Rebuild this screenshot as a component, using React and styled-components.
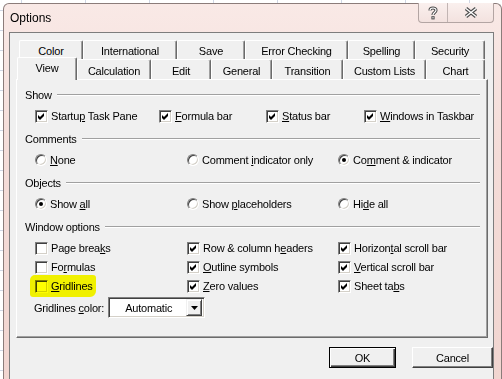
import styled, { createGlobalStyle } from 'styled-components';

const GlobalStyle = createGlobalStyle`
  html, body {
    margin: 0;
    padding: 0;
    width: 502px;
    height: 379px;
    overflow: hidden;
  }
  body {
    background-color: #ffffff;
    background-image:
      linear-gradient(90deg, #d0d7e5 1px, transparent 1px),
      linear-gradient(#d0d7e5 1px, transparent 1px);
    background-size: 64px 20px;
    background-position: 21px 10px;
    font-family: "Liberation Sans", Arial, sans-serif;
  }
`;

const rowOne = [
  ['Color', 64], ['International', 94], ['Save', 68],
  ['Error Checking', 103], ['Spelling', 67], ['Security', 70],
];
const rowTwo = [
  ['View', 60], ['Calculation', 74], ['Edit', 60], ['General', 61],
  ['Transition', 71], ['Custom Lists', 83], ['Chart', 59],
];

// label with access key: [before, key, after]
const Label = ({ t }) => (
  <span>{t[0]}<u>{t[1]}</u>{t[2]}</span>
);

const Check = ({ on }) => (
  <CheckBox>
    {on && (
      <svg width="7" height="7" viewBox="0 0 7 7">
        <path d="M0 2 L2 4 L6 0 L6 3 L2 7 L0 5 Z" fill="#000" />
      </svg>
    )}
  </CheckBox>
);

const CheckItem = ({ on, t, highlight }) => (
  <Item>
    <Check on={on} />
    <Label t={t} />
    {highlight && <Marker />}
  </Item>
);

const RadioItem = ({ on, t }) => (
  <Item>
    <Radio>{on && <Dot />}</Radio>
    <Label t={t} />
  </Item>
);

const Section = ({ title, children }) => (
  <Group>
    <Header>
      <span>{title}</span>
      <Rule />
    </Header>
    {children}
  </Group>
);

const App = () => {
  return (
    <>
      <GlobalStyle />
      <Window>
        <TitleBar>
          <Title>Options</Title>
          <Caption>
            <CapButton $w={28}>
              <svg width="10" height="14" viewBox="0 0 10 14">
                <path d="M2 4.5 C2 1.2 8 1.2 8 4.3 C8 6.5 5 6.5 5 9" fill="none" stroke="#4d4d4d" strokeWidth="3.2" />
                <path d="M2 4.5 C2 1.2 8 1.2 8 4.3 C8 6.5 5 6.5 5 9" fill="none" stroke="#fff" strokeWidth="1.2" />
                <rect x="3.4" y="10.2" width="3.2" height="3.2" fill="#4d4d4d" />
                <rect x="4.4" y="11.2" width="1.2" height="1.2" fill="#fff" />
              </svg>
            </CapButton>
            <CapButton $w={45} $last>
              <svg width="14" height="11" viewBox="0 0 14 11">
                <path d="M2 1.5 L12 9.5 M12 1.5 L2 9.5" stroke="#4d4d4d" strokeWidth="3.6" />
                <path d="M2 1.5 L12 9.5 M12 1.5 L2 9.5" stroke="#fff" strokeWidth="1.4" />
              </svg>
            </CapButton>
          </Caption>
        </TitleBar>

        <Client>
          <TabControl>
            <TabRow $indent={3} $h={19}>
              {rowOne.map(([name, w]) => (
                <Tab key={name} $w={w} $h={19}>{name}</Tab>
              ))}
            </TabRow>
            <TabRow $indent={1} $h={20}>
              {rowTwo.map(([name, w], i) => (
                <Tab key={name} $w={w} $h={20} $active={i === 0}>{name}</Tab>
              ))}
            </TabRow>

            <Panel>
              <Section title="Show">
                <Options $cols="124px 107px 98px auto">
                  <CheckItem on t={['Startu', 'p', ' Task Pane']} />
                  <CheckItem on t={['', 'F', 'ormula bar']} />
                  <CheckItem on t={['', 'S', 'tatus bar']} />
                  <CheckItem on t={['', 'W', 'indows in Taskbar']} />
                </Options>
              </Section>

              <Section title="Comments">
                <Options $cols="152px 151px auto">
                  <RadioItem t={['', 'N', 'one']} />
                  <RadioItem t={['Comment ', 'i', 'ndicator only']} />
                  <RadioItem on t={['Co', 'm', 'ment & indicator']} />
                </Options>
              </Section>

              <Section title="Objects">
                <Options $cols="152px 151px auto">
                  <RadioItem on t={['Show ', 'a', 'll']} />
                  <RadioItem t={['Show ', 'p', 'laceholders']} />
                  <RadioItem t={['Hi', 'd', 'e all']} />
                </Options>
              </Section>

              <Section title="Window options">
                <Options $cols="152px 151px auto" $gap={5}>
                  <CheckItem t={['Page brea', 'k', 's']} />
                  <CheckItem on t={['Row & column h', 'e', 'aders']} />
                  <CheckItem on t={['Horizon', 't', 'al scroll bar']} />
                  <CheckItem t={['Fo', 'r', 'mulas']} />
                  <CheckItem on t={['', 'O', 'utline symbols']} />
                  <CheckItem on t={['', 'V', 'ertical scroll bar']} />
                  <CheckItem highlight t={['', 'G', 'ridlines']} />
                  <CheckItem on t={['', 'Z', 'ero values']} />
                  <CheckItem on t={['Sheet ta', 'b', 's']} />
                </Options>
                <ColorRow>
                  <Label t={['Gridlines ', 'c', 'olor:']} />
                  <Combo>
                    <ComboText>Automatic</ComboText>
                    <ComboButton>
                      <svg width="7" height="4" viewBox="0 0 7 4">
                        <path d="M0 0 H7 L3.5 4 Z" fill="#000" />
                      </svg>
                    </ComboButton>
                  </Combo>
                </ColorRow>
              </Section>
            </Panel>
          </TabControl>

          <ButtonRow>
            <PushButton $w={67} $default>OK</PushButton>
            <PushButton $w={81}>Cancel</PushButton>
          </ButtonRow>
        </Client>
      </Window>
    </>
  );
};

//Styled Components
const Window = styled.div`
  box-sizing: border-box;
  margin: 3px 0 0 3px;
  width: 499px;
  height: 380px;
  border: 1px solid #8b7c7a;
  border-bottom: none;
  border-radius: 6px 6px 0 0;
  background: linear-gradient(180deg, #f9e9e6 0%, #f4dcd8 40%, #f1d5d0 100%);
  display: flex;
  flex-direction: column;
`

const TitleBar = styled.div`
  height: 28px;
  display: flex;
  align-items: center;
  justify-content: space-between;
  padding-left: 6px;
  padding-right: 7px;
`

const Title = styled.div`
  font-family: "Liberation Sans", Arial, sans-serif;
  font-size: 12px;
  color: #000;
`

const Caption = styled.div`
  align-self: flex-start;
  margin-top: -1px;
  display: flex;
  height: 19px;
  border: 1px solid #b3a5a3;
  border-top: none;
  border-radius: 0 0 4px 4px;
  background: linear-gradient(180deg, #faf0ee, #f3e2df);
  overflow: hidden;
`

const CapButton = styled.div`
  width: ${p => p.$w}px;
  display: flex;
  align-items: center;
  justify-content: center;
  border-right: ${p => (p.$last ? 'none' : '1px solid #c2b5b3')};
`

const Client = styled.div`
  flex: 1;
  margin: 0 7px 0 5px;
  border: 1px solid #7d7d7d;
  border-bottom: none;
  background: #f0f0f0;
  padding: 7px 0 0 6px;
  font-size: 11px;
  letter-spacing: -0.2px;
  color: #000;
`

const TabControl = styled.div`
  margin-right: 5px;
  display: flex;
  flex-direction: column;
`

const TabRow = styled.div`
  display: flex;
  align-items: flex-end;
  height: ${p => p.$h}px;
  padding-left: ${p => p.$indent}px;
`

const Tab = styled.div`
  box-sizing: border-box;
  width: ${p => p.$w}px;
  height: ${p => (p.$active ? 23 : p.$h)}px;
  margin-bottom: ${p => (p.$active ? -1 : 0)}px;
  position: relative;
  z-index: ${p => (p.$active ? 2 : 1)};
  display: flex;
  align-items: center;
  justify-content: center;
  padding-top: ${p => (p.$active ? 0 : 2)}px;
  padding-bottom: ${p => (p.$active ? 2 : 0)}px;
  background: #f0f0f0;
  border-top: 1px solid #ffffff;
  border-left: 1px solid #ffffff;
  border-right: 1px solid #6b6b6b;
  box-shadow: inset -1px 0 #a0a0a0;
  border-radius: 2px 2px 0 0;
  white-space: nowrap;
`

const Panel = styled.div`
  box-sizing: border-box;
  height: 259px;
  background: #f0f0f0;
  border-top: 1px solid #ffffff;
  border-left: 1px solid #ffffff;
  border-right: 1px solid #6b6b6b;
  border-bottom: 1px solid #6b6b6b;
  box-shadow: inset -1px -1px #a0a0a0;
  padding: 8px 7px 0 8px;
`

const Group = styled.div`
  margin-bottom: 9px;
`

const Header = styled.div`
  display: flex;
  align-items: center;
  gap: 5px;
  height: 14px;
  margin-bottom: 7px;
`

const Rule = styled.div`
  flex: 1;
  height: 0;
  border-top: 1px solid #a0a0a0;
  border-bottom: 1px solid #ffffff;
`

const Options = styled.div`
  display: grid;
  grid-template-columns: ${p => p.$cols};
  row-gap: ${p => p.$gap || 0}px;
  padding-left: 10px;
`

const Item = styled.div`
  position: relative;
  display: flex;
  align-items: center;
  gap: 3px;
  height: 14px;
  white-space: nowrap;
  width: max-content;
`

const Marker = styled.span`
  position: absolute;
  left: -5px;
  top: -4px;
  right: -3px;
  bottom: -4px;
  background: #ffff00;
  mix-blend-mode: multiply;
  border-radius: 5px 3px 6px 3px;
  pointer-events: none;
`

const CheckBox = styled.div`
  box-sizing: border-box;
  width: 13px;
  height: 13px;
  flex: none;
  background: #ffffff;
  border: 1px solid;
  border-color: #808080 #ffffff #ffffff #808080;
  box-shadow: inset 1px 1px #404040, inset -1px -1px #d4d0c8;
  display: flex;
  align-items: center;
  justify-content: center;
`

const Radio = styled.div`
  box-sizing: border-box;
  width: 12px;
  height: 12px;
  flex: none;
  border-radius: 50%;
  background: #ffffff;
  border: 1px solid;
  border-color: #808080 #ffffff #ffffff #808080;
  box-shadow: inset 1px 1px #404040, inset -1px -1px #d4d0c8;
  display: flex;
  align-items: center;
  justify-content: center;
`

const Dot = styled.div`
  width: 4px;
  height: 4px;
  border-radius: 50%;
  background: #000;
`

const ColorRow = styled.div`
  display: flex;
  align-items: center;
  gap: 4px;
  margin-top: 4px;
  padding-left: 9px;
`

const Combo = styled.div`
  box-sizing: border-box;
  width: 97px;
  height: 21px;
  display: flex;
  align-items: center;
  background: #ffffff;
  border: 1px solid;
  border-color: #808080 #ffffff #ffffff #808080;
  box-shadow: inset 1px 1px #404040, inset -1px -1px #d4d0c8;
  padding: 2px;
`

const ComboText = styled.div`
  flex: 1;
  text-align: center;
`

const ComboButton = styled.div`
  box-sizing: border-box;
  width: 16px;
  height: 17px;
  display: flex;
  align-items: center;
  justify-content: center;
  background: #f0f0f0;
  border: 1px solid;
  border-color: #f0f0f0 #404040 #404040 #f0f0f0;
  box-shadow: inset 1px 1px #ffffff, inset -1px -1px #808080;
`

const ButtonRow = styled.div`
  display: flex;
  justify-content: flex-end;
  gap: 16px;
  margin-top: 9px;
`

const PushButton = styled.div`
  box-sizing: border-box;
  width: ${p => p.$w}px;
  height: 21px;
  display: flex;
  align-items: center;
  justify-content: center;
  background: #f0f0f0;
  border: 1px solid;
  border-color: ${p => (p.$default ? '#000' : '#ffffff #404040 #404040 #ffffff')};
  box-shadow: ${p => (p.$default
    ? 'inset 1px 1px #ffffff, inset -1px -1px #404040, inset -2px -2px #808080'
    : 'inset -1px -1px #808080')};
`

export default App;
